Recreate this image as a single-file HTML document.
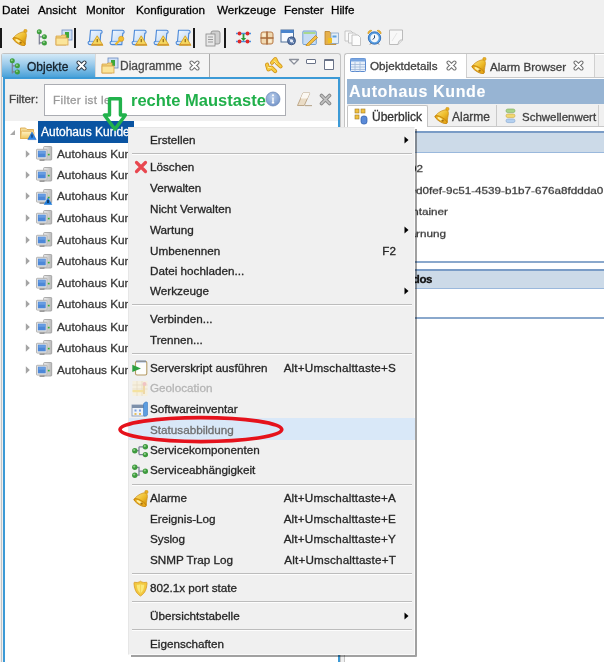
<!DOCTYPE html><html><head><meta charset="utf-8"><style>
html,body{margin:0;padding:0}
body{width:604px;height:662px;position:relative;overflow:hidden;background:#f0f0f0;font-family:"Liberation Sans", sans-serif;-webkit-font-smoothing:antialiased}
.t{position:absolute;white-space:nowrap;line-height:16px;font-family:"Liberation Sans", sans-serif;-webkit-text-stroke:0.3px currentColor;will-change:transform}
.b{position:absolute;display:block}
</style></head><body>
<div class="t" style="left:2.4px;top:2.3px;font-size:11.7px;color:#000;font-weight:normal;">Datei</div>
<div class="t" style="left:38.1px;top:2.3px;font-size:11.7px;color:#000;font-weight:normal;">Ansicht</div>
<div class="t" style="left:85.5px;top:2.3px;font-size:11.7px;color:#000;font-weight:normal;">Monitor</div>
<div class="t" style="left:135.6px;top:2.3px;font-size:11.7px;color:#000;font-weight:normal;">Konfiguration</div>
<div class="t" style="left:217.0px;top:2.3px;font-size:11.7px;color:#000;font-weight:normal;">Werkzeuge</div>
<div class="t" style="left:284.0px;top:2.3px;font-size:11.7px;color:#000;font-weight:normal;">Fenster</div>
<div class="t" style="left:331.0px;top:2.3px;font-size:11.7px;color:#000;font-weight:normal;">Hilfe</div>
<div class="b" style="left:0px;top:28px;width:1.5px;height:20px;background:#1a1a1a"></div>
<svg class="b" style="left:11px;top:29px;" width="17" height="17" viewBox="0 0 17 17"><defs><linearGradient id="bg1" x1="0" y1="0" x2="1" y2="1"><stop offset="0" stop-color="#fde88a"/><stop offset="0.55" stop-color="#eebc2a"/><stop offset="1" stop-color="#c8860a"/></linearGradient></defs>
<circle cx="14.4" cy="2" r="1.7" fill="#e8b020" stroke="#c88a10" stroke-width="0.5"/>
<path d="M1.8 9.8 C3.5 6.8 7 4.2 11.2 3 C13.6 2.4 15.6 3.6 15.4 6.6 C15.2 9.2 14.2 11.6 14.4 15.4 Z" fill="url(#bg1)" stroke="#c88a10" stroke-width="0.7" stroke-linejoin="round"/>
<ellipse cx="8.1" cy="12.6" rx="6.9" ry="2.3" transform="rotate(31 8.1 12.6)" fill="#e6a818" stroke="#c07e08" stroke-width="0.7"/>
<ellipse cx="7.6" cy="12.2" rx="3.6" ry="1.1" transform="rotate(31 7.6 12.2)" fill="#fff0a0"/>
<circle cx="9.6" cy="13.6" r="1.2" fill="#a87008"/></svg>
<svg class="b" style="left:36px;top:29px;" width="12" height="17" viewBox="0 0 12 17"><path d="M3.3 3 V15.5 M3.3 7.8 H8 M3.3 13.9 H8" stroke="#7a7f94" stroke-width="1.2" fill="none"/>
<circle cx="3.3" cy="2.8" r="2.5" fill="#3e9e3e"/><circle cx="8.4" cy="7.8" r="2.5" fill="#3e9e3e"/><circle cx="8.4" cy="13.9" r="2.5" fill="#3e9e3e"/>
<circle cx="2.8" cy="2.2" r="1" fill="#8fd08a"/><circle cx="7.9" cy="7.2" r="1" fill="#8fd08a"/><circle cx="7.9" cy="13.3" r="1" fill="#8fd08a"/></svg>
<svg class="b" style="left:55px;top:29px;" width="18" height="17" viewBox="0 0 18 17"><rect x="7" y="1" width="10" height="10" fill="#cfe0f5" stroke="#6a8ac0" stroke-width="0.8"/>
<rect x="10" y="3" width="4" height="6" fill="#3da83a"/>
<path d="M1 7 H6 L7 6 H11 V16 H1 Z" fill="#f2d27a" stroke="#d8a44a" stroke-width="0.8"/>
<rect x="1" y="9" width="12" height="7" fill="#fbe59a" stroke="#d8a44a" stroke-width="0.8"/></svg>
<div class="b" style="left:74px;top:28px;width:1.5px;height:20px;background:#1a1a1a"></div>
<svg class="b" style="left:87px;top:29px;" width="17" height="17" viewBox="0 0 17 17"><defs><linearGradient id="sg" x1="0" y1="0" x2="1" y2="1"><stop offset="0" stop-color="#f4f9ff"/><stop offset="1" stop-color="#b8d4f4"/></linearGradient></defs>
<path d="M3.5 1.2 H13.5 C15.6 1.2 15.6 4.4 13.8 4.4 L12.8 15.6 H2.8 C0.6 15.6 0.6 12.4 2.5 12.4 Z" fill="url(#sg)" stroke="#4a88d8" stroke-width="1.1"/>
<path d="M2.5 12.4 H11.5" stroke="#6a9ee0" stroke-width="0.9"/><path d="M10.2 6.8 L16 16.3 H4.4 Z" fill="#f6d860" stroke="#d09a18" stroke-width="0.8" stroke-linejoin="round"/><path d="M4.6 15.6 H15.8" stroke="#d89a30" stroke-width="1.4"/><rect x="9.7" y="10" width="1" height="3.2" fill="#7a5000"/></svg>
<svg class="b" style="left:109px;top:29px;" width="17" height="17" viewBox="0 0 17 17"><defs><linearGradient id="sg" x1="0" y1="0" x2="1" y2="1"><stop offset="0" stop-color="#f4f9ff"/><stop offset="1" stop-color="#b8d4f4"/></linearGradient></defs>
<path d="M3.5 1.2 H13.5 C15.6 1.2 15.6 4.4 13.8 4.4 L12.8 15.6 H2.8 C0.6 15.6 0.6 12.4 2.5 12.4 Z" fill="url(#sg)" stroke="#4a88d8" stroke-width="1.1"/>
<path d="M2.5 12.4 H11.5" stroke="#6a9ee0" stroke-width="0.9"/><circle cx="12.2" cy="9.8" r="2.6" fill="#f4c030" stroke="#d09018" stroke-width="0.6"/><path d="M10.5 11.5 L6.5 15.5" stroke="#f0b828" stroke-width="2.2"/></svg>
<svg class="b" style="left:131px;top:29px;" width="17" height="17" viewBox="0 0 17 17"><defs><linearGradient id="sg" x1="0" y1="0" x2="1" y2="1"><stop offset="0" stop-color="#f4f9ff"/><stop offset="1" stop-color="#b8d4f4"/></linearGradient></defs>
<path d="M3.5 1.2 H13.5 C15.6 1.2 15.6 4.4 13.8 4.4 L12.8 15.6 H2.8 C0.6 15.6 0.6 12.4 2.5 12.4 Z" fill="url(#sg)" stroke="#4a88d8" stroke-width="1.1"/>
<path d="M2.5 12.4 H11.5" stroke="#6a9ee0" stroke-width="0.9"/><path d="M10.2 6.8 L16 16.3 H4.4 Z" fill="#f6d860" stroke="#d09a18" stroke-width="0.8" stroke-linejoin="round"/><path d="M4.6 15.6 H15.8" stroke="#d89a30" stroke-width="1.4"/><rect x="9.7" y="10" width="1" height="3.2" fill="#7a5000"/></svg>
<svg class="b" style="left:153px;top:29px;" width="17" height="17" viewBox="0 0 17 17"><defs><linearGradient id="sg" x1="0" y1="0" x2="1" y2="1"><stop offset="0" stop-color="#f4f9ff"/><stop offset="1" stop-color="#b8d4f4"/></linearGradient></defs>
<path d="M3.5 1.2 H13.5 C15.6 1.2 15.6 4.4 13.8 4.4 L12.8 15.6 H2.8 C0.6 15.6 0.6 12.4 2.5 12.4 Z" fill="url(#sg)" stroke="#4a88d8" stroke-width="1.1"/>
<path d="M2.5 12.4 H11.5" stroke="#6a9ee0" stroke-width="0.9"/><path d="M10.2 6.8 L16 16.3 H4.4 Z" fill="#f6d860" stroke="#d09a18" stroke-width="0.8" stroke-linejoin="round"/><path d="M4.6 15.6 H15.8" stroke="#d89a30" stroke-width="1.4"/><rect x="9.7" y="10" width="1" height="3.2" fill="#7a5000"/></svg>
<svg class="b" style="left:175px;top:29px;" width="17" height="17" viewBox="0 0 17 17"><defs><linearGradient id="sg" x1="0" y1="0" x2="1" y2="1"><stop offset="0" stop-color="#f4f9ff"/><stop offset="1" stop-color="#b8d4f4"/></linearGradient></defs>
<path d="M3.5 1.2 H13.5 C15.6 1.2 15.6 4.4 13.8 4.4 L12.8 15.6 H2.8 C0.6 15.6 0.6 12.4 2.5 12.4 Z" fill="url(#sg)" stroke="#4a88d8" stroke-width="1.1"/>
<path d="M2.5 12.4 H11.5" stroke="#6a9ee0" stroke-width="0.9"/><path d="M10.2 6.8 L16 16.3 H4.4 Z" fill="#f6d860" stroke="#d09a18" stroke-width="0.8" stroke-linejoin="round"/><path d="M4.6 15.6 H15.8" stroke="#d89a30" stroke-width="1.4"/><rect x="9.7" y="10" width="1" height="3.2" fill="#7a5000"/></svg>
<div class="b" style="left:193px;top:28px;width:1.5px;height:20px;background:#1a1a1a"></div>
<svg class="b" style="left:205px;top:30px;" width="17" height="17" viewBox="0 0 17 17"><rect x="6" y="1" width="9" height="13" rx="2" fill="#d0d0d0" stroke="#888" stroke-width="0.8"/>
<rect x="1" y="4" width="9" height="12" fill="#e8e8e8" stroke="#888" stroke-width="0.8"/>
<path d="M3 7 H8 M3 9.5 H8 M3 12 H8" stroke="#999" stroke-width="1"/></svg>
<div class="b" style="left:224px;top:28px;width:1.5px;height:20px;background:#1a1a1a"></div>
<svg class="b" style="left:235px;top:30px;" width="17" height="16" viewBox="0 0 17 16"><path d="M1 3.5 H16 M1 11.5 H16" stroke="#4a90e0" stroke-width="1.3"/>
<path d="M8.5 4 V9" stroke="#2a9a3a" stroke-width="1.8"/><path d="M5.8 8 L8.5 11 L11.2 8 Z" fill="#2a9a3a"/>
<circle cx="4.5" cy="3.5" r="1.9" fill="#e02828"/><circle cx="12.5" cy="3.5" r="1.9" fill="#e02828"/>
<circle cx="4.5" cy="11.5" r="1.9" fill="#e02828"/><circle cx="12.5" cy="11.5" r="1.9" fill="#e02828"/></svg>
<svg class="b" style="left:260px;top:31px;" width="14" height="14" viewBox="0 0 14 14"><rect x="1" y="1" width="12" height="12" rx="2" fill="#f0d8b0" stroke="#b87a48" stroke-width="1"/>
<path d="M7 0.5 V13.5 M0.5 7 H13.5" stroke="#a86a3a" stroke-width="1.6"/>
<rect x="2.5" y="2.5" width="3" height="3" fill="#fbeed0"/><rect x="8.5" y="8.5" width="3" height="3" fill="#fbeed0"/></svg>
<svg class="b" style="left:280px;top:29px;" width="17" height="17" viewBox="0 0 17 17"><rect x="1" y="1" width="12.5" height="12" fill="#f8fbff" stroke="#50709a" stroke-width="1"/>
<rect x="1" y="1" width="12.5" height="3" fill="#4a84cc"/>
<circle cx="11.5" cy="11.8" r="4" fill="#5a78a8" stroke="#304a78" stroke-width="0.8"/><circle cx="11.5" cy="11.8" r="1.6" fill="#e8eef8"/>
<path d="M9 9.5 L14 14.2" stroke="#e8eef8" stroke-width="0.9"/></svg>
<svg class="b" style="left:302px;top:30px;" width="16" height="16" viewBox="0 0 16 16"><rect x="0.8" y="1" width="13.5" height="13.5" rx="1" fill="#c6dcf4" stroke="#6a9ad0" stroke-width="0.9"/>
<rect x="1.5" y="2" width="12" height="2" fill="#a8d890"/>
<path d="M4.5 14.5 L13.5 5.5 L15.6 7.6 L6.6 16 L4 16 Z" fill="#f4c040" stroke="#b07818" stroke-width="0.7"/></svg>
<svg class="b" style="left:324px;top:29px;" width="16" height="17" viewBox="0 0 16 17"><path d="M1 2.5 H5.5 L7 4.5 H12 V15.5 H1 Z" fill="#e6b04a" stroke="#b88228" stroke-width="0.8"/>
<rect x="7" y="4" width="7.5" height="10.5" fill="#e4eef8" stroke="#7a9ac0" stroke-width="0.7"/>
<rect x="8.5" y="6.5" width="4" height="2" fill="#5aa0e0"/><rect x="4" y="9" width="4" height="5" fill="#f0c020"/></svg>
<svg class="b" style="left:344px;top:30px;" width="18" height="16" viewBox="0 0 18 16"><path d="M1 1 H7 L9 3 V11 H1 Z" fill="#fafafa" stroke="#c0c0c0" stroke-width="0.9"/>
<path d="M4.5 3 H10.5 L12.5 5 V13 H4.5 Z" fill="#fafafa" stroke="#c0c0c0" stroke-width="0.9"/>
<path d="M8 5 H14 L16.5 7.5 V15.5 H8 Z" fill="#fcfcfc" stroke="#bdbdbd" stroke-width="0.9"/></svg>
<svg class="b" style="left:366px;top:29px;" width="17" height="17" viewBox="0 0 17 17"><path d="M2 5 A3 3 0 0 1 6 1.5 Z" fill="#f0b830" stroke="#c89020" stroke-width="0.6"/>
<path d="M15 5 A3 3 0 0 0 11 1.5 Z" fill="#f0b830" stroke="#c89020" stroke-width="0.6"/>
<circle cx="8.5" cy="9" r="6.2" fill="#5a9ee0" stroke="#2a6ab8" stroke-width="0.9"/>
<circle cx="8.5" cy="9" r="4.2" fill="#f4f8fc"/><path d="M8.5 6.3 V9 L6.6 10.4" stroke="#2a4a70" stroke-width="1" fill="none"/>
<path d="M4 15.5 L5.5 14 M13 15.5 L11.5 14" stroke="#666" stroke-width="1"/></svg>
<svg class="b" style="left:388px;top:29px;" width="16" height="17" viewBox="0 0 16 17"><path d="M1.5 1 H14.5 V11 L10 15.5 H1.5 Z" fill="#f8f8f8" stroke="#b4b4b4" stroke-width="0.9"/>
<path d="M14.5 11 C12 10.5 10.5 12 10 15.5" fill="#e4e4e4" stroke="#b4b4b4" stroke-width="0.9"/>
<path d="M4 12 L9 4" stroke="#e0e0e0" stroke-width="0.8"/></svg>
<div class="b" style="left:1px;top:53px;width:340px;height:609px;background:#f0f0f0;border:1px solid #c4c4c4;border-bottom:none;border-radius:3px 3px 0 0;box-sizing:border-box"></div>
<div class="b" style="left:2px;top:54px;width:93px;height:23px;background:linear-gradient(#d3e9f7,#9ccbeb 45%,#4aa2d9);"></div>
<svg class="b" style="left:9px;top:57.7px;" width="12" height="17" viewBox="0 0 12 17"><path d="M3.3 3 V15.5 M3.3 7.8 H8 M3.3 13.9 H8" stroke="#7a7f94" stroke-width="1.2" fill="none"/>
<circle cx="3.3" cy="2.8" r="2.5" fill="#3e9e3e"/><circle cx="8.4" cy="7.8" r="2.5" fill="#3e9e3e"/><circle cx="8.4" cy="13.9" r="2.5" fill="#3e9e3e"/>
<circle cx="2.8" cy="2.2" r="1" fill="#8fd08a"/><circle cx="7.9" cy="7.2" r="1" fill="#8fd08a"/><circle cx="7.9" cy="13.3" r="1" fill="#8fd08a"/></svg>
<div class="t" style="left:27.0px;top:58.8px;font-size:12px;color:#15202a;font-weight:normal;">Objekte</div>
<svg class="b" style="left:76px;top:60px;" width="11" height="11" viewBox="0 0 11 11"><path d="M2.5 2.5 L8.5 8.5 M8.5 2.5 L2.5 8.5" stroke="#2a3440" stroke-width="4" stroke-linecap="round"/>
<path d="M2.5 2.5 L8.5 8.5 M8.5 2.5 L2.5 8.5" stroke="#fff" stroke-width="2.2" stroke-linecap="round"/></svg>
<div class="b" style="left:95px;top:54px;width:115px;height:23px;background:#f4f4f4;border-left:1px solid #d9d9d9;border-right:1.5px solid #a8a8a8;box-sizing:border-box"></div>
<svg class="b" style="left:101px;top:57px;" width="18" height="17" viewBox="0 0 18 17"><rect x="7" y="1" width="10" height="10" fill="#cfe0f5" stroke="#6a8ac0" stroke-width="0.8"/>
<rect x="10" y="3" width="4" height="6" fill="#3da83a"/>
<path d="M1 7 H6 L7 6 H11 V16 H1 Z" fill="#f2d27a" stroke="#d8a44a" stroke-width="0.8"/>
<rect x="1" y="9" width="12" height="7" fill="#fbe59a" stroke="#d8a44a" stroke-width="0.8"/></svg>
<div class="t" style="left:120.0px;top:58.3px;font-size:12px;color:#4a4a4a;font-weight:normal;">Diagramme</div>
<svg class="b" style="left:189px;top:60px;" width="11" height="11" viewBox="0 0 11 11"><path d="M2.5 2.5 L8.5 8.5 M8.5 2.5 L2.5 8.5" stroke="#707070" stroke-width="4" stroke-linecap="round"/>
<path d="M2.5 2.5 L8.5 8.5 M8.5 2.5 L2.5 8.5" stroke="#fff" stroke-width="2" stroke-linecap="round"/></svg>
<svg class="b" style="left:262px;top:54px;" width="24" height="22" viewBox="0 0 24 22"><g fill="none" stroke-linejoin="round" stroke-linecap="round">
<path d="M10 8.8 L13.3 5 L15.3 9.3 L18.6 12.4" stroke="#d09018" stroke-width="4"/>
<path d="M5 10.6 L6.4 15.4 L9.6 13.6 L13.2 17.2" stroke="#d09018" stroke-width="4"/>
<path d="M10 8.8 L13.3 5 L15.3 9.3 L18.6 12.4" stroke="#f6cc40" stroke-width="2.4"/>
<path d="M5 10.6 L6.4 15.4 L9.6 13.6 L13.2 17.2" stroke="#f6cc40" stroke-width="2.4"/>
<path d="M12.3 7 L14.5 9.5" stroke="#fff0a0" stroke-width="1"/><path d="M6.3 13.5 L9 13.8" stroke="#fff0a0" stroke-width="1"/></g></svg>
<svg class="b" style="left:288px;top:58px;" width="12" height="8" viewBox="0 0 12 8"><path d="M1.5 1.5 H10.5 L6 6 Z" fill="#fff" stroke="#8a8f9a" stroke-width="1.3" stroke-linejoin="round"/></svg>
<div class="b" style="left:306px;top:59px;width:10px;height:4.5px;border:1.3px solid #6a7388;border-radius:1px;box-sizing:border-box;background:#fff"></div>
<div class="b" style="left:323.5px;top:59px;width:10.5px;height:10.5px;border:1.3px solid #6a7388;border-top-width:2.3px;border-radius:1px;box-sizing:border-box;background:#fff"></div>
<div class="b" style="left:3px;top:77px;width:337px;height:585px;border:2px solid #3c9ad6;border-bottom:none;box-sizing:border-box;background:#fff"></div>
<div class="b" style="left:5px;top:79px;width:333px;height:42px;background:#f0f0f0"></div>
<div class="t" style="left:9.0px;top:91.4px;font-size:11.7px;color:#444;font-weight:normal;">Filter:</div>
<div class="b" style="left:44px;top:84px;width:242px;height:32px;background:#fff;border:1px solid #abadb3;box-sizing:border-box"></div>
<div class="t" style="left:52.5px;top:92.2px;font-size:11.7px;color:#9a9a9a;font-weight:normal;letter-spacing:0.35px">Filter ist leer</div>
<svg class="b" style="left:296px;top:91px;" width="17" height="16" viewBox="0 0 17 16"><path d="M1.5 14.5 L7 2 H13.8 L8.3 14.5 Z" fill="#eadcc6" stroke="#b8a080" stroke-width="0.9" stroke-linejoin="round"/>
<path d="M4.6 7.6 L7 2 H13.8 L11.3 7.6 Z" fill="#fbf8f2"/>
<path d="M9 14.6 H16" stroke="#b8a890" stroke-width="1.1"/></svg>
<svg class="b" style="left:319px;top:93px;" width="13" height="13" viewBox="0 0 13 13"><path d="M2.5 2.5 L10.5 10.5 M10.5 2.5 L2.5 10.5" stroke="#8c8c8c" stroke-width="3.6" stroke-linecap="round"/>
<path d="M2.5 2.5 L10.5 10.5 M10.5 2.5 L2.5 10.5" stroke="#c4c4c4" stroke-width="1.6" stroke-linecap="round"/></svg>
<svg class="b" style="left:9px;top:129px;" width="7" height="7" viewBox="0 0 7 7"><path d="M6 1 V6 H1 Z" fill="#a8a8a8"/></svg>
<svg class="b" style="left:19px;top:126px;" width="18" height="15" viewBox="0 0 18 15"><defs><linearGradient id="fg" x1="0" y1="0" x2="0" y2="1"><stop offset="0" stop-color="#fff4c8"/><stop offset="1" stop-color="#f0c860"/></linearGradient></defs>
<path d="M1.5 2 H6.5 L8 3.5 H14.5 V12.5 H1.5 Z" fill="#f4dc98" stroke="#dcaa50" stroke-width="0.9"/>
<path d="M2.5 5 H14 L15 6.5 V12.5 H1.5 Z" fill="url(#fg)" stroke="#e0b050" stroke-width="0.7"/>
<path d="M3.5 5.5 H13" stroke="#e8c070" stroke-width="0.8"/>
<path d="M13 6 L17.2 13.6 H8.8 Z" fill="#2a86e8" stroke="#1a60c0" stroke-width="0.5"/><rect x="12.5" y="8.5" width="1" height="3.2" fill="#102040"/></svg>
<div class="b" style="left:38.3px;top:121px;width:95.7px;height:22px;background:#0a54a2"></div>
<div class="t" style="left:41.0px;top:124.2px;font-size:12px;color:#fff;font-weight:normal;">Autohaus Kunde</div>
<svg class="b" style="left:25px;top:150px;" width="6" height="8" viewBox="0 0 6 8"><path d="M0.8 0.2 L4.8 4 L0.8 7.8 Z" fill="#a4a4a4"/></svg>
<svg class="b" style="left:35.5px;top:146px;" width="17" height="16" viewBox="0 0 17 16"><defs><linearGradient id="tw" x1="0" x2="1"><stop offset="0" stop-color="#f0f0f0"/><stop offset="1" stop-color="#b8b8b8"/></linearGradient></defs>
<rect x="7.7" y="0.5" width="8" height="13.5" rx="0.8" fill="url(#tw)" stroke="#9a9a9a" stroke-width="0.8"/>
<rect x="11.8" y="7.8" width="1.8" height="1.6" fill="#30b030"/>
<rect x="12" y="10.5" width="1.5" height="2" fill="#c8c8c8"/>
<rect x="0.5" y="3.3" width="10.5" height="9.8" rx="0.6" fill="#e6e6e6" stroke="#a6a6a6" stroke-width="0.8"/>
<rect x="1.9" y="4.7" width="7.8" height="6.6" fill="#4d88d8"/>
<rect x="2.5" y="5.2" width="6.6" height="2.5" fill="#6a9ee2"/>
<rect x="3.5" y="13.2" width="5" height="1.8" fill="#9c9c9c"/></svg>
<div class="t" style="left:57.4px;top:145.7px;font-size:11.8px;color:#383838;font-weight:normal;">Autohaus Kunde</div>
<svg class="b" style="left:25px;top:171px;" width="6" height="8" viewBox="0 0 6 8"><path d="M0.8 0.2 L4.8 4 L0.8 7.8 Z" fill="#a4a4a4"/></svg>
<svg class="b" style="left:35.5px;top:167px;" width="17" height="16" viewBox="0 0 17 16"><defs><linearGradient id="tw" x1="0" x2="1"><stop offset="0" stop-color="#f0f0f0"/><stop offset="1" stop-color="#b8b8b8"/></linearGradient></defs>
<rect x="7.7" y="0.5" width="8" height="13.5" rx="0.8" fill="url(#tw)" stroke="#9a9a9a" stroke-width="0.8"/>
<rect x="11.8" y="7.8" width="1.8" height="1.6" fill="#30b030"/>
<rect x="12" y="10.5" width="1.5" height="2" fill="#c8c8c8"/>
<rect x="0.5" y="3.3" width="10.5" height="9.8" rx="0.6" fill="#e6e6e6" stroke="#a6a6a6" stroke-width="0.8"/>
<rect x="1.9" y="4.7" width="7.8" height="6.6" fill="#4d88d8"/>
<rect x="2.5" y="5.2" width="6.6" height="2.5" fill="#6a9ee2"/>
<rect x="3.5" y="13.2" width="5" height="1.8" fill="#9c9c9c"/></svg>
<div class="t" style="left:57.4px;top:166.8px;font-size:11.8px;color:#383838;font-weight:normal;">Autohaus Kunde</div>
<svg class="b" style="left:25px;top:192px;" width="6" height="8" viewBox="0 0 6 8"><path d="M0.8 0.2 L4.8 4 L0.8 7.8 Z" fill="#a4a4a4"/></svg>
<svg class="b" style="left:35.5px;top:189px;" width="17" height="16" viewBox="0 0 17 16"><defs><linearGradient id="tw" x1="0" x2="1"><stop offset="0" stop-color="#f0f0f0"/><stop offset="1" stop-color="#b8b8b8"/></linearGradient></defs>
<rect x="7.7" y="0.5" width="8" height="13.5" rx="0.8" fill="url(#tw)" stroke="#9a9a9a" stroke-width="0.8"/>
<rect x="11.8" y="7.8" width="1.8" height="1.6" fill="#30b030"/>
<rect x="12" y="10.5" width="1.5" height="2" fill="#c8c8c8"/>
<rect x="0.5" y="3.3" width="10.5" height="9.8" rx="0.6" fill="#e6e6e6" stroke="#a6a6a6" stroke-width="0.8"/>
<rect x="1.9" y="4.7" width="7.8" height="6.6" fill="#4d88d8"/>
<rect x="2.5" y="5.2" width="6.6" height="2.5" fill="#6a9ee2"/>
<rect x="3.5" y="13.2" width="5" height="1.8" fill="#9c9c9c"/><path d="M12 8.5 L16.3 15.8 H7.7 Z" fill="#1e7ad8"/><rect x="11.5" y="11" width="1" height="3" fill="#000"/></svg>
<div class="t" style="left:57.4px;top:188.3px;font-size:11.8px;color:#383838;font-weight:normal;">Autohaus Kunde</div>
<svg class="b" style="left:25px;top:214px;" width="6" height="8" viewBox="0 0 6 8"><path d="M0.8 0.2 L4.8 4 L0.8 7.8 Z" fill="#a4a4a4"/></svg>
<svg class="b" style="left:35.5px;top:210px;" width="17" height="16" viewBox="0 0 17 16"><defs><linearGradient id="tw" x1="0" x2="1"><stop offset="0" stop-color="#f0f0f0"/><stop offset="1" stop-color="#b8b8b8"/></linearGradient></defs>
<rect x="7.7" y="0.5" width="8" height="13.5" rx="0.8" fill="url(#tw)" stroke="#9a9a9a" stroke-width="0.8"/>
<rect x="11.8" y="7.8" width="1.8" height="1.6" fill="#30b030"/>
<rect x="12" y="10.5" width="1.5" height="2" fill="#c8c8c8"/>
<rect x="0.5" y="3.3" width="10.5" height="9.8" rx="0.6" fill="#e6e6e6" stroke="#a6a6a6" stroke-width="0.8"/>
<rect x="1.9" y="4.7" width="7.8" height="6.6" fill="#4d88d8"/>
<rect x="2.5" y="5.2" width="6.6" height="2.5" fill="#6a9ee2"/>
<rect x="3.5" y="13.2" width="5" height="1.8" fill="#9c9c9c"/></svg>
<div class="t" style="left:57.4px;top:210.1px;font-size:11.8px;color:#383838;font-weight:normal;">Autohaus Kunde</div>
<svg class="b" style="left:25px;top:236px;" width="6" height="8" viewBox="0 0 6 8"><path d="M0.8 0.2 L4.8 4 L0.8 7.8 Z" fill="#a4a4a4"/></svg>
<svg class="b" style="left:35.5px;top:232px;" width="17" height="16" viewBox="0 0 17 16"><defs><linearGradient id="tw" x1="0" x2="1"><stop offset="0" stop-color="#f0f0f0"/><stop offset="1" stop-color="#b8b8b8"/></linearGradient></defs>
<rect x="7.7" y="0.5" width="8" height="13.5" rx="0.8" fill="url(#tw)" stroke="#9a9a9a" stroke-width="0.8"/>
<rect x="11.8" y="7.8" width="1.8" height="1.6" fill="#30b030"/>
<rect x="12" y="10.5" width="1.5" height="2" fill="#c8c8c8"/>
<rect x="0.5" y="3.3" width="10.5" height="9.8" rx="0.6" fill="#e6e6e6" stroke="#a6a6a6" stroke-width="0.8"/>
<rect x="1.9" y="4.7" width="7.8" height="6.6" fill="#4d88d8"/>
<rect x="2.5" y="5.2" width="6.6" height="2.5" fill="#6a9ee2"/>
<rect x="3.5" y="13.2" width="5" height="1.8" fill="#9c9c9c"/></svg>
<div class="t" style="left:57.4px;top:231.8px;font-size:11.8px;color:#383838;font-weight:normal;">Autohaus Kunde</div>
<svg class="b" style="left:25px;top:257px;" width="6" height="8" viewBox="0 0 6 8"><path d="M0.8 0.2 L4.8 4 L0.8 7.8 Z" fill="#a4a4a4"/></svg>
<svg class="b" style="left:35.5px;top:254px;" width="17" height="16" viewBox="0 0 17 16"><defs><linearGradient id="tw" x1="0" x2="1"><stop offset="0" stop-color="#f0f0f0"/><stop offset="1" stop-color="#b8b8b8"/></linearGradient></defs>
<rect x="7.7" y="0.5" width="8" height="13.5" rx="0.8" fill="url(#tw)" stroke="#9a9a9a" stroke-width="0.8"/>
<rect x="11.8" y="7.8" width="1.8" height="1.6" fill="#30b030"/>
<rect x="12" y="10.5" width="1.5" height="2" fill="#c8c8c8"/>
<rect x="0.5" y="3.3" width="10.5" height="9.8" rx="0.6" fill="#e6e6e6" stroke="#a6a6a6" stroke-width="0.8"/>
<rect x="1.9" y="4.7" width="7.8" height="6.6" fill="#4d88d8"/>
<rect x="2.5" y="5.2" width="6.6" height="2.5" fill="#6a9ee2"/>
<rect x="3.5" y="13.2" width="5" height="1.8" fill="#9c9c9c"/></svg>
<div class="t" style="left:57.4px;top:253.3px;font-size:11.8px;color:#383838;font-weight:normal;">Autohaus Kunde</div>
<svg class="b" style="left:25px;top:279px;" width="6" height="8" viewBox="0 0 6 8"><path d="M0.8 0.2 L4.8 4 L0.8 7.8 Z" fill="#a4a4a4"/></svg>
<svg class="b" style="left:35.5px;top:275px;" width="17" height="16" viewBox="0 0 17 16"><defs><linearGradient id="tw" x1="0" x2="1"><stop offset="0" stop-color="#f0f0f0"/><stop offset="1" stop-color="#b8b8b8"/></linearGradient></defs>
<rect x="7.7" y="0.5" width="8" height="13.5" rx="0.8" fill="url(#tw)" stroke="#9a9a9a" stroke-width="0.8"/>
<rect x="11.8" y="7.8" width="1.8" height="1.6" fill="#30b030"/>
<rect x="12" y="10.5" width="1.5" height="2" fill="#c8c8c8"/>
<rect x="0.5" y="3.3" width="10.5" height="9.8" rx="0.6" fill="#e6e6e6" stroke="#a6a6a6" stroke-width="0.8"/>
<rect x="1.9" y="4.7" width="7.8" height="6.6" fill="#4d88d8"/>
<rect x="2.5" y="5.2" width="6.6" height="2.5" fill="#6a9ee2"/>
<rect x="3.5" y="13.2" width="5" height="1.8" fill="#9c9c9c"/></svg>
<div class="t" style="left:57.4px;top:275.1px;font-size:11.8px;color:#383838;font-weight:normal;">Autohaus Kunde</div>
<svg class="b" style="left:25px;top:300px;" width="6" height="8" viewBox="0 0 6 8"><path d="M0.8 0.2 L4.8 4 L0.8 7.8 Z" fill="#a4a4a4"/></svg>
<svg class="b" style="left:35.5px;top:297px;" width="17" height="16" viewBox="0 0 17 16"><defs><linearGradient id="tw" x1="0" x2="1"><stop offset="0" stop-color="#f0f0f0"/><stop offset="1" stop-color="#b8b8b8"/></linearGradient></defs>
<rect x="7.7" y="0.5" width="8" height="13.5" rx="0.8" fill="url(#tw)" stroke="#9a9a9a" stroke-width="0.8"/>
<rect x="11.8" y="7.8" width="1.8" height="1.6" fill="#30b030"/>
<rect x="12" y="10.5" width="1.5" height="2" fill="#c8c8c8"/>
<rect x="0.5" y="3.3" width="10.5" height="9.8" rx="0.6" fill="#e6e6e6" stroke="#a6a6a6" stroke-width="0.8"/>
<rect x="1.9" y="4.7" width="7.8" height="6.6" fill="#4d88d8"/>
<rect x="2.5" y="5.2" width="6.6" height="2.5" fill="#6a9ee2"/>
<rect x="3.5" y="13.2" width="5" height="1.8" fill="#9c9c9c"/></svg>
<div class="t" style="left:57.4px;top:296.4px;font-size:11.8px;color:#383838;font-weight:normal;">Autohaus Kunde</div>
<svg class="b" style="left:25px;top:323px;" width="6" height="8" viewBox="0 0 6 8"><path d="M0.8 0.2 L4.8 4 L0.8 7.8 Z" fill="#a4a4a4"/></svg>
<svg class="b" style="left:35.5px;top:319px;" width="17" height="16" viewBox="0 0 17 16"><defs><linearGradient id="tw" x1="0" x2="1"><stop offset="0" stop-color="#f0f0f0"/><stop offset="1" stop-color="#b8b8b8"/></linearGradient></defs>
<rect x="7.7" y="0.5" width="8" height="13.5" rx="0.8" fill="url(#tw)" stroke="#9a9a9a" stroke-width="0.8"/>
<rect x="11.8" y="7.8" width="1.8" height="1.6" fill="#30b030"/>
<rect x="12" y="10.5" width="1.5" height="2" fill="#c8c8c8"/>
<rect x="0.5" y="3.3" width="10.5" height="9.8" rx="0.6" fill="#e6e6e6" stroke="#a6a6a6" stroke-width="0.8"/>
<rect x="1.9" y="4.7" width="7.8" height="6.6" fill="#4d88d8"/>
<rect x="2.5" y="5.2" width="6.6" height="2.5" fill="#6a9ee2"/>
<rect x="3.5" y="13.2" width="5" height="1.8" fill="#9c9c9c"/></svg>
<div class="t" style="left:57.4px;top:319.0px;font-size:11.8px;color:#383838;font-weight:normal;">Autohaus Kunde</div>
<svg class="b" style="left:25px;top:344px;" width="6" height="8" viewBox="0 0 6 8"><path d="M0.8 0.2 L4.8 4 L0.8 7.8 Z" fill="#a4a4a4"/></svg>
<svg class="b" style="left:35.5px;top:340px;" width="17" height="16" viewBox="0 0 17 16"><defs><linearGradient id="tw" x1="0" x2="1"><stop offset="0" stop-color="#f0f0f0"/><stop offset="1" stop-color="#b8b8b8"/></linearGradient></defs>
<rect x="7.7" y="0.5" width="8" height="13.5" rx="0.8" fill="url(#tw)" stroke="#9a9a9a" stroke-width="0.8"/>
<rect x="11.8" y="7.8" width="1.8" height="1.6" fill="#30b030"/>
<rect x="12" y="10.5" width="1.5" height="2" fill="#c8c8c8"/>
<rect x="0.5" y="3.3" width="10.5" height="9.8" rx="0.6" fill="#e6e6e6" stroke="#a6a6a6" stroke-width="0.8"/>
<rect x="1.9" y="4.7" width="7.8" height="6.6" fill="#4d88d8"/>
<rect x="2.5" y="5.2" width="6.6" height="2.5" fill="#6a9ee2"/>
<rect x="3.5" y="13.2" width="5" height="1.8" fill="#9c9c9c"/></svg>
<div class="t" style="left:57.4px;top:340.2px;font-size:11.8px;color:#383838;font-weight:normal;">Autohaus Kunde</div>
<svg class="b" style="left:25px;top:366px;" width="6" height="8" viewBox="0 0 6 8"><path d="M0.8 0.2 L4.8 4 L0.8 7.8 Z" fill="#a4a4a4"/></svg>
<svg class="b" style="left:35.5px;top:362px;" width="17" height="16" viewBox="0 0 17 16"><defs><linearGradient id="tw" x1="0" x2="1"><stop offset="0" stop-color="#f0f0f0"/><stop offset="1" stop-color="#b8b8b8"/></linearGradient></defs>
<rect x="7.7" y="0.5" width="8" height="13.5" rx="0.8" fill="url(#tw)" stroke="#9a9a9a" stroke-width="0.8"/>
<rect x="11.8" y="7.8" width="1.8" height="1.6" fill="#30b030"/>
<rect x="12" y="10.5" width="1.5" height="2" fill="#c8c8c8"/>
<rect x="0.5" y="3.3" width="10.5" height="9.8" rx="0.6" fill="#e6e6e6" stroke="#a6a6a6" stroke-width="0.8"/>
<rect x="1.9" y="4.7" width="7.8" height="6.6" fill="#4d88d8"/>
<rect x="2.5" y="5.2" width="6.6" height="2.5" fill="#6a9ee2"/>
<rect x="3.5" y="13.2" width="5" height="1.8" fill="#9c9c9c"/></svg>
<div class="t" style="left:57.4px;top:361.9px;font-size:11.8px;color:#383838;font-weight:normal;">Autohaus Kunde</div>
<div class="b" style="left:343.5px;top:53px;width:260.5px;height:609px;background:#fff;border:1.5px solid #c4c4c4;border-right:none;border-bottom:none;border-radius:3px 0 0 0;box-sizing:border-box"></div>
<div class="b" style="left:345px;top:54.5px;width:259px;height:22.5px;background:#f0f0f0;border-top-left-radius:2px"></div>
<div class="b" style="left:345px;top:54.5px;width:121px;height:24.5px;background:#fff;border-top-left-radius:2px"></div>
<svg class="b" style="left:350px;top:58px;" width="17" height="15" viewBox="0 0 17 15"><rect x="0.5" y="0.5" width="15" height="13" rx="1" fill="#e8f0fa" stroke="#5a8ad0" stroke-width="1"/>
<rect x="0.5" y="0.5" width="15" height="3" fill="#7aa6e0"/>
<path d="M1 6.5 H15 M1 9 H15 M1 11.5 H15 M5 4 V14 M10 4 V14" stroke="#a0b8d8" stroke-width="0.8"/></svg>
<div class="t" style="left:369.5px;top:58.4px;font-size:11.7px;color:#404040;font-weight:normal;">Objektdetails</div>
<svg class="b" style="left:446px;top:60px;" width="11" height="11" viewBox="0 0 11 11"><path d="M2.5 2.5 L8.5 8.5 M8.5 2.5 L2.5 8.5" stroke="#707070" stroke-width="4" stroke-linecap="round"/>
<path d="M2.5 2.5 L8.5 8.5 M8.5 2.5 L2.5 8.5" stroke="#fff" stroke-width="2" stroke-linecap="round"/></svg>
<div class="b" style="left:466px;top:54px;width:128.5px;height:23px;background:#f6f6f6;border-left:1px solid #d0d0d0;border-right:1px solid #d0d0d0;box-sizing:border-box"></div>
<svg class="b" style="left:470px;top:57px;" width="17" height="17" viewBox="0 0 17 17"><defs><linearGradient id="bg1" x1="0" y1="0" x2="1" y2="1"><stop offset="0" stop-color="#fde88a"/><stop offset="0.55" stop-color="#eebc2a"/><stop offset="1" stop-color="#c8860a"/></linearGradient></defs>
<circle cx="14.4" cy="2" r="1.7" fill="#e8b020" stroke="#c88a10" stroke-width="0.5"/>
<path d="M1.8 9.8 C3.5 6.8 7 4.2 11.2 3 C13.6 2.4 15.6 3.6 15.4 6.6 C15.2 9.2 14.2 11.6 14.4 15.4 Z" fill="url(#bg1)" stroke="#c88a10" stroke-width="0.7" stroke-linejoin="round"/>
<ellipse cx="8.1" cy="12.6" rx="6.9" ry="2.3" transform="rotate(31 8.1 12.6)" fill="#e6a818" stroke="#c07e08" stroke-width="0.7"/>
<ellipse cx="7.6" cy="12.2" rx="3.6" ry="1.1" transform="rotate(31 7.6 12.2)" fill="#fff0a0"/>
<circle cx="9.6" cy="13.6" r="1.2" fill="#a87008"/></svg>
<div class="t" style="left:490.3px;top:58.5px;font-size:11.6px;color:#404040;font-weight:normal;">Alarm Browser</div>
<svg class="b" style="left:573px;top:60px;" width="11" height="11" viewBox="0 0 11 11"><path d="M2.5 2.5 L8.5 8.5 M8.5 2.5 L2.5 8.5" stroke="#707070" stroke-width="4" stroke-linecap="round"/>
<path d="M2.5 2.5 L8.5 8.5 M8.5 2.5 L2.5 8.5" stroke="#fff" stroke-width="2" stroke-linecap="round"/></svg>
<div class="b" style="left:345px;top:77px;width:121px;height:1px;background:#fff"></div>
<div class="b" style="left:466px;top:76.5px;width:138px;height:1px;background:#c9c9c9"></div>
<div class="b" style="left:347px;top:79px;width:257px;height:24.6px;background:#97b4d3"></div>
<div class="t" style="left:348.8px;top:84.0px;font-size:16px;color:#fff;font-weight:bold;letter-spacing:0.65px;-webkit-text-stroke:0.1px #fff">Autohaus Kunde</div>
<div class="b" style="left:347px;top:104px;width:257px;height:22px;background:#f0f0f0"></div>
<div class="b" style="left:347px;top:104.5px;width:81px;height:22.5px;background:#fff;border:1px solid #c4c4c4;border-bottom:none;border-radius:2px 2px 0 0;box-sizing:border-box"></div>
<svg class="b" style="left:353.5px;top:108px;" width="14" height="17" viewBox="0 0 14 17"><rect x="1" y="1" width="4" height="4" fill="#f0c040" stroke="#a07a20" stroke-width="0.6"/>
<rect x="7" y="1" width="4" height="4" fill="#f0c040" stroke="#a07a20" stroke-width="0.6"/>
<rect x="1" y="7" width="4" height="4" fill="#f0c040" stroke="#a07a20" stroke-width="0.6"/>
<rect x="7" y="8" width="6" height="8" rx="2.5" fill="#5a8ad8" stroke="#2a5aa8" stroke-width="0.7"/></svg>
<div class="t" style="left:371.5px;top:108.8px;font-size:12px;color:#333;font-weight:normal;">Überblick</div>
<div class="b" style="left:428px;top:105px;width:69px;height:21px;background:#f0f0f0;border-right:1px solid #c9c9c9;box-sizing:border-box"></div>
<svg class="b" style="left:433px;top:107px;" width="17" height="17" viewBox="0 0 17 17"><defs><linearGradient id="bg1" x1="0" y1="0" x2="1" y2="1"><stop offset="0" stop-color="#fde88a"/><stop offset="0.55" stop-color="#eebc2a"/><stop offset="1" stop-color="#c8860a"/></linearGradient></defs>
<circle cx="14.4" cy="2" r="1.7" fill="#e8b020" stroke="#c88a10" stroke-width="0.5"/>
<path d="M1.8 9.8 C3.5 6.8 7 4.2 11.2 3 C13.6 2.4 15.6 3.6 15.4 6.6 C15.2 9.2 14.2 11.6 14.4 15.4 Z" fill="url(#bg1)" stroke="#c88a10" stroke-width="0.7" stroke-linejoin="round"/>
<ellipse cx="8.1" cy="12.6" rx="6.9" ry="2.3" transform="rotate(31 8.1 12.6)" fill="#e6a818" stroke="#c07e08" stroke-width="0.7"/>
<ellipse cx="7.6" cy="12.2" rx="3.6" ry="1.1" transform="rotate(31 7.6 12.2)" fill="#fff0a0"/>
<circle cx="9.6" cy="13.6" r="1.2" fill="#a87008"/></svg>
<div class="t" style="left:452.0px;top:108.8px;font-size:12px;color:#404040;font-weight:normal;">Alarme</div>
<svg class="b" style="left:504.5px;top:108px;" width="11" height="16" viewBox="0 0 11 16"><rect x="1" y="1" width="9" height="3.6" rx="1.8" fill="#a8d488" stroke="#78a858" stroke-width="0.6"/>
<rect x="1" y="6" width="9" height="3.6" rx="1.8" fill="#f2d870" stroke="#c8a840" stroke-width="0.6"/>
<rect x="1" y="11" width="9" height="3.6" rx="1.8" fill="#b4d0f0" stroke="#80a4d0" stroke-width="0.6"/></svg>
<div class="b" style="left:598.3px;top:105px;width:1.2px;height:21px;background:#cdcdcd"></div>
<div class="t" style="left:521.5px;top:109.0px;font-size:11.5px;color:#404040;font-weight:normal;">Schwellenwert</div>
<div class="b" style="left:428px;top:126px;width:176px;height:1px;background:#c9c9c9"></div>
<div class="b" style="left:347px;top:127px;width:257px;height:535px;background:#fff"></div>
<div class="b" style="left:347px;top:131px;width:257px;height:2px;background:#7a9cc6"></div>
<div class="b" style="left:347px;top:133px;width:257px;height:18.5px;background:#ccdae8"></div>
<div class="b" style="left:347px;top:151.5px;width:257px;height:1px;background:#9ab8dc"></div>
<div class="t" style="left:123.0px;width:300px;text-align:right;top:159.6px;font-size:11.7px;color:#3a3a3a;font-weight:normal;transform:scaleY(0.88);transform-origin:0 12.3px">1002</div>
<div class="t" style="left:402.9px;top:181.7px;font-size:11.7px;color:#3a3a3a;font-weight:normal;transform:scaleY(0.88);transform-origin:0 12.3px">6ed0fef-9c51-4539-b1b7-676a8fddda0</div>
<div class="t" style="left:148.3px;width:300px;text-align:right;top:203.0px;font-size:11.7px;color:#3a3a3a;font-weight:normal;transform:scaleY(0.88);transform-origin:0 12.3px">Container</div>
<div class="t" style="left:145.6px;width:300px;text-align:right;top:225.2px;font-size:11.7px;color:#3a3a3a;font-weight:normal;transform:scaleY(0.88);transform-origin:0 12.3px">Warnung</div>
<div class="b" style="left:347px;top:260.8px;width:257px;height:2px;background:#8aa8cc"></div>
<div class="b" style="left:347px;top:268.5px;width:257px;height:2px;background:#7a9cc6"></div>
<div class="b" style="left:347px;top:270.5px;width:257px;height:17.8px;background:#ccdae8"></div>
<div class="b" style="left:347px;top:288.3px;width:257px;height:1px;background:#9ab8dc"></div>
<div class="t" style="left:131.6px;width:300px;text-align:right;top:271.3px;font-size:11.5px;color:#111;font-weight:bold;letter-spacing:-0.4px">Kommandos</div>
<div class="b" style="left:347px;top:316.5px;width:257px;height:2px;background:#8aa8cc"></div>
<div class="b" style="left:130.5px;top:129px;width:286px;height:528px;background:rgba(0,0,0,0.37);border-radius:0 0 1px 0"></div>
<div class="b" style="left:128px;top:126.5px;width:286.5px;height:528.5px;background:#f0f0f0;border:1px solid #e6e6e6;border-right-color:#fafafa;border-bottom-color:#fafafa;box-sizing:border-box"></div>
<div class="b" style="left:129px;top:418.2px;width:286px;height:22px;background:#d9e8f8"></div>
<div class="t" style="left:150.3px;top:132.2px;font-size:11.7px;color:#262626;font-weight:normal;">Erstellen</div>
<svg class="b" style="left:403.5px;top:136px;" width="5" height="8" viewBox="0 0 5 8"><path d="M0.5 0.5 L4.5 4 L0.5 7.5 Z" fill="#000"/></svg>
<div class="b" style="left:132px;top:153px;width:280px;height:1px;background:#bcbcbc"></div>
<div class="b" style="left:132px;top:154px;width:280px;height:1px;background:#fdfdfd"></div>
<div class="t" style="left:150.3px;top:158.8px;font-size:11.7px;color:#262626;font-weight:normal;">Löschen</div>
<div class="t" style="left:150.3px;top:179.7px;font-size:11.7px;color:#262626;font-weight:normal;">Verwalten</div>
<div class="t" style="left:150.3px;top:200.7px;font-size:11.7px;color:#262626;font-weight:normal;">Nicht Verwalten</div>
<div class="t" style="left:150.3px;top:221.9px;font-size:11.7px;color:#262626;font-weight:normal;">Wartung</div>
<svg class="b" style="left:403.5px;top:226px;" width="5" height="8" viewBox="0 0 5 8"><path d="M0.5 0.5 L4.5 4 L0.5 7.5 Z" fill="#000"/></svg>
<div class="t" style="left:150.3px;top:242.6px;font-size:11.7px;color:#262626;font-weight:normal;">Umbenennen</div>
<div class="t" style="left:96.2px;width:300px;text-align:right;top:242.6px;font-size:11.7px;color:#262626;font-weight:normal;">F2</div>
<div class="t" style="left:150.3px;top:262.8px;font-size:11.7px;color:#262626;font-weight:normal;">Datei hochladen...</div>
<div class="t" style="left:150.3px;top:282.8px;font-size:11.7px;color:#262626;font-weight:normal;">Werkzeuge</div>
<svg class="b" style="left:403.5px;top:287px;" width="5" height="8" viewBox="0 0 5 8"><path d="M0.5 0.5 L4.5 4 L0.5 7.5 Z" fill="#000"/></svg>
<div class="b" style="left:132px;top:304px;width:280px;height:1px;background:#bcbcbc"></div>
<div class="b" style="left:132px;top:305px;width:280px;height:1px;background:#fdfdfd"></div>
<div class="t" style="left:150.3px;top:311.3px;font-size:11.7px;color:#262626;font-weight:normal;">Verbinden...</div>
<div class="t" style="left:150.3px;top:331.9px;font-size:11.7px;color:#262626;font-weight:normal;">Trennen...</div>
<div class="b" style="left:132px;top:353px;width:280px;height:1px;background:#bcbcbc"></div>
<div class="b" style="left:132px;top:354px;width:280px;height:1px;background:#fdfdfd"></div>
<div class="t" style="left:150.3px;top:359.9px;font-size:11.7px;color:#262626;font-weight:normal;">Serverskript ausführen</div>
<div class="t" style="left:96.2px;width:300px;text-align:right;top:359.9px;font-size:11.7px;color:#262626;font-weight:normal;letter-spacing:0.17px">Alt+Umschalttaste+S</div>
<div class="t" style="left:150.3px;top:380.1px;font-size:11.7px;color:#b4b4b4;font-weight:normal;">Geolocation</div>
<div class="t" style="left:150.3px;top:400.5px;font-size:11.7px;color:#262626;font-weight:normal;">Softwareinventar</div>
<div class="t" style="left:150.3px;top:421.7px;font-size:11.7px;color:#6e6e6e;font-weight:normal;">Statusabbildung</div>
<div class="t" style="left:150.3px;top:441.6px;font-size:11.7px;color:#262626;font-weight:normal;">Servicekomponenten</div>
<div class="t" style="left:150.3px;top:461.5px;font-size:11.7px;color:#262626;font-weight:normal;">Serviceabhängigkeit</div>
<div class="b" style="left:132px;top:484px;width:280px;height:1px;background:#bcbcbc"></div>
<div class="b" style="left:132px;top:485px;width:280px;height:1px;background:#fdfdfd"></div>
<div class="t" style="left:150.3px;top:490.1px;font-size:11.7px;color:#262626;font-weight:normal;">Alarme</div>
<div class="t" style="left:96.2px;width:300px;text-align:right;top:490.1px;font-size:11.7px;color:#262626;font-weight:normal;letter-spacing:0.17px">Alt+Umschalttaste+A</div>
<div class="t" style="left:150.3px;top:510.5px;font-size:11.7px;color:#262626;font-weight:normal;">Ereignis-Log</div>
<div class="t" style="left:96.2px;width:300px;text-align:right;top:510.5px;font-size:11.7px;color:#262626;font-weight:normal;letter-spacing:0.17px">Alt+Umschalttaste+E</div>
<div class="t" style="left:150.3px;top:531.3px;font-size:11.7px;color:#262626;font-weight:normal;">Syslog</div>
<div class="t" style="left:96.2px;width:300px;text-align:right;top:531.3px;font-size:11.7px;color:#262626;font-weight:normal;letter-spacing:0.17px">Alt+Umschalttaste+Y</div>
<div class="t" style="left:150.3px;top:552.4px;font-size:11.7px;color:#262626;font-weight:normal;">SNMP Trap Log</div>
<div class="t" style="left:96.2px;width:300px;text-align:right;top:552.4px;font-size:11.7px;color:#262626;font-weight:normal;letter-spacing:0.17px">Alt+Umschalttaste+T</div>
<div class="b" style="left:132px;top:573px;width:280px;height:1px;background:#bcbcbc"></div>
<div class="b" style="left:132px;top:574px;width:280px;height:1px;background:#fdfdfd"></div>
<div class="t" style="left:150.3px;top:580.0px;font-size:11.7px;color:#262626;font-weight:normal;">802.1x port state</div>
<div class="b" style="left:132px;top:601px;width:280px;height:1px;background:#bcbcbc"></div>
<div class="b" style="left:132px;top:602px;width:280px;height:1px;background:#fdfdfd"></div>
<div class="t" style="left:150.3px;top:607.7px;font-size:11.7px;color:#262626;font-weight:normal;">Übersichtstabelle</div>
<svg class="b" style="left:403.5px;top:612px;" width="5" height="8" viewBox="0 0 5 8"><path d="M0.5 0.5 L4.5 4 L0.5 7.5 Z" fill="#000"/></svg>
<div class="b" style="left:132px;top:629px;width:280px;height:1px;background:#bcbcbc"></div>
<div class="b" style="left:132px;top:630px;width:280px;height:1px;background:#fdfdfd"></div>
<div class="t" style="left:150.3px;top:635.5px;font-size:11.7px;color:#262626;font-weight:normal;">Eigenschaften</div>
<svg class="b" style="left:134px;top:160px;" width="14" height="14" viewBox="0 0 14 14"><path d="M2.5 2.5 L11.5 11.5 M11.5 2.5 L2.5 11.5" stroke="#e8474f" stroke-width="3.2" stroke-linecap="round"/></svg>
<svg class="b" style="left:132px;top:360px;" width="16" height="16" viewBox="0 0 16 16"><rect x="3.5" y="1.2" width="11.3" height="13.8" rx="1.6" fill="#fdfdfb" stroke="#b49a62" stroke-width="1.1"/>
<path d="M5 0.3 V2.6 M7 0.3 V2.6 M9 0.3 V2.6 M11 0.3 V2.6 M13 0.3 V2.6" stroke="#4a70b0" stroke-width="0.9"/>
<path d="M0.3 4.8 L9 8.4 L0.3 12 Z" fill="#2ea040"/></svg>
<svg class="b" style="left:132px;top:380px;" width="16" height="17" viewBox="0 0 16 17"><rect x="0.5" y="1" width="15" height="15" fill="#f6efdc" opacity="0.9"/>
<path d="M0.5 5 H15.5 M0.5 9 H15.5 M5 1 V16 M10 1 V16" stroke="#e6dcc4" stroke-width="0.8"/>
<rect x="0.5" y="10" width="12" height="2.2" fill="#f4e2a0"/>
<path d="M12 3 V14" stroke="#eed8a8" stroke-width="2"/>
<circle cx="12.5" cy="4" r="2" fill="#f0c4c4"/></svg>
<svg class="b" style="left:131px;top:401px;" width="17" height="16" viewBox="0 0 17 16"><rect x="1" y="4" width="12.5" height="11" fill="#eef3fa" stroke="#8a9cb8" stroke-width="0.9"/>
<rect x="1" y="4" width="12.5" height="3" fill="#7d90aa"/>
<rect x="3.5" y="8.5" width="2" height="2" fill="#7aa0e0"/><rect x="8" y="8.5" width="2" height="2" fill="#7aa0e0"/>
<rect x="3.5" y="12" width="2" height="2" fill="#e6c060"/><rect x="8" y="12" width="2" height="2" fill="#e6c060"/>
<path d="M12.5 3 C13.5 1 15.5 0.5 16.5 1.5 V14 C15.5 15.5 13.5 15.5 12.5 14.5 Z" fill="#5d9de0" stroke="#3a78c0" stroke-width="0.6"/></svg>
<svg class="b" style="left:130px;top:442px;" width="18" height="16" viewBox="0 0 18 16"><path d="M4.8 8.7 H9 M9 4.8 V12.6 M9 4.8 H13 M9 12.6 H13" stroke="#7d8196" stroke-width="1.3" fill="none"/><circle cx="4.8" cy="8.7" r="2.7" fill="#3e9a3e"/><circle cx="4.2" cy="7.999999999999999" r="1.1" fill="#8fd08a"/><circle cx="15.4" cy="4.8" r="2.7" fill="#3e9a3e"/><circle cx="14.8" cy="4.1" r="1.1" fill="#8fd08a"/><circle cx="15.4" cy="12.6" r="2.7" fill="#3e9a3e"/><circle cx="14.8" cy="11.9" r="1.1" fill="#8fd08a"/></svg>
<svg class="b" style="left:130px;top:463px;" width="18" height="16" viewBox="0 0 18 16"><path d="M4.8 4.3 H9 V12.2 H4.8 M9 8.2 H13" stroke="#7d8196" stroke-width="1.3" fill="none"/><circle cx="4.8" cy="4.3" r="2.7" fill="#3e9a3e"/><circle cx="4.2" cy="3.5999999999999996" r="1.1" fill="#8fd08a"/><circle cx="4.8" cy="12.2" r="2.7" fill="#3e9a3e"/><circle cx="4.2" cy="11.5" r="1.1" fill="#8fd08a"/><circle cx="15.4" cy="8.2" r="2.7" fill="#3e9a3e"/><circle cx="14.8" cy="7.499999999999999" r="1.1" fill="#8fd08a"/></svg>
<svg class="b" style="left:132px;top:490px;" width="17" height="17" viewBox="0 0 17 17"><defs><linearGradient id="bg1" x1="0" y1="0" x2="1" y2="1"><stop offset="0" stop-color="#fde88a"/><stop offset="0.55" stop-color="#eebc2a"/><stop offset="1" stop-color="#c8860a"/></linearGradient></defs>
<circle cx="14.4" cy="2" r="1.7" fill="#e8b020" stroke="#c88a10" stroke-width="0.5"/>
<path d="M1.8 9.8 C3.5 6.8 7 4.2 11.2 3 C13.6 2.4 15.6 3.6 15.4 6.6 C15.2 9.2 14.2 11.6 14.4 15.4 Z" fill="url(#bg1)" stroke="#c88a10" stroke-width="0.7" stroke-linejoin="round"/>
<ellipse cx="8.1" cy="12.6" rx="6.9" ry="2.3" transform="rotate(31 8.1 12.6)" fill="#e6a818" stroke="#c07e08" stroke-width="0.7"/>
<ellipse cx="7.6" cy="12.2" rx="3.6" ry="1.1" transform="rotate(31 7.6 12.2)" fill="#fff0a0"/>
<circle cx="9.6" cy="13.6" r="1.2" fill="#a87008"/></svg>
<svg class="b" style="left:132px;top:580px;" width="17" height="17" viewBox="0 0 17 17"><path d="M8.5 1.2 C10 2.5 12.5 2.8 14.6 2.2 L15 3.2 C14.6 8.5 13.5 13 8.5 16 C3.5 13 2.4 8.5 2 3.2 L2.4 2.2 C4.5 2.8 7 2.5 8.5 1.2 Z" fill="#f2c840" stroke="#d89a20" stroke-width="0.8"/>
<path d="M8.5 4 C9.8 4.8 11 5 12.3 4.8 C12 9 11 11.5 8.5 13.5 C6 11.5 5 9 4.7 4.8 C6 5 7.2 4.8 8.5 4 Z" fill="#fbe878"/>
<path d="M8.5 4 V13.5" stroke="#f0d050" stroke-width="0.8"/></svg>
<svg class="b" style="left:100px;top:92px;" width="32" height="42" viewBox="0 0 32 42"><defs><clipPath id="ac"><rect x="0" y="0" width="32" height="29"/></clipPath></defs>
<path d="M9.5 6.8 H20.4 V23 H25.4 L14.9 37.2 L4.4 23 H9.5 Z" fill="#fff" clip-path="url(#ac)"/>
<path d="M9.5 6.8 H20.4 V23 H25.4 L14.9 37.2 L4.4 23 H9.5 Z" fill="none" stroke="#22b24c" stroke-width="3.4" stroke-linejoin="round"/></svg>
<div class="t" style="left:131.4px;top:92.2px;font-size:16.5px;color:#20b04a;font-weight:bold;-webkit-text-stroke:0">rechte Maustaste</div>
<svg class="b" style="left:265px;top:91px;" width="16" height="16" viewBox="0 0 16 16"><defs><radialGradient id="ig" cx="0.45" cy="0.35" r="0.75"><stop offset="0" stop-color="#b8cdea"/><stop offset="1" stop-color="#6a8cc4"/></radialGradient></defs>
<circle cx="8" cy="8" r="7" fill="url(#ig)" stroke="#6a88b8" stroke-width="0.7"/>
<path d="M8 6.5 V11.5 M6.8 11.8 H9.2" stroke="#fff" stroke-width="1.4"/><circle cx="8" cy="4.3" r="1" fill="#fff"/></svg>
<svg class="b" style="left:110px;top:410px;" width="184" height="40" viewBox="0 0 184 40"><ellipse cx="90.9" cy="19.6" rx="80.9" ry="12" fill="none" stroke="#e5121c" stroke-width="3.6"/></svg>
</body></html>
